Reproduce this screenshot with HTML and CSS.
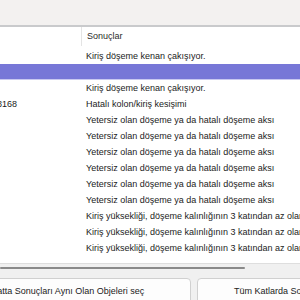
FILE: index.html
```html
<!DOCTYPE html>
<html lang="tr">
<head>
    <meta charset="UTF-8">
    <meta name="viewport" content="width=device-width, initial-scale=1.0">
    <title>Kontrol Sonuçları</title>
    <link rel="stylesheet" href="styles.css">
</head>
<body>
    <div class="toolbar"></div>
    <div class="grid">
        <div class="row head"><div class="c1"></div><div class="c2">Sonuçlar</div></div>
        <div class="row"><div class="c1"></div><div class="c2">Kiriş döşeme kenan çakışıyor.</div></div>
        <div class="row sel"><div class="c1"></div><div class="c2"></div></div>
        <div class="row"><div class="c1"></div><div class="c2">Kiriş döşeme kenan çakışıyor.</div></div>
        <div class="row"><div class="c1 id">38168</div><div class="c2">Hatalı kolon/kiriş kesişimi</div></div>
        <div class="row"><div class="c1"></div><div class="c2">Yetersiz olan döşeme ya da hatalı döşeme aksı</div></div>
        <div class="row"><div class="c1"></div><div class="c2">Yetersiz olan döşeme ya da hatalı döşeme aksı</div></div>
        <div class="row"><div class="c1"></div><div class="c2">Yetersiz olan döşeme ya da hatalı döşeme aksı</div></div>
        <div class="row"><div class="c1"></div><div class="c2">Yetersiz olan döşeme ya da hatalı döşeme aksı</div></div>
        <div class="row"><div class="c1"></div><div class="c2">Yetersiz olan döşeme ya da hatalı döşeme aksı</div></div>
        <div class="row"><div class="c1"></div><div class="c2">Yetersiz olan döşeme ya da hatalı döşeme aksı</div></div>
        <div class="row"><div class="c1"></div><div class="c2">Kiriş yüksekliği, döşeme kalınlığının 3 katından az olan kirişler</div></div>
        <div class="row"><div class="c1"></div><div class="c2">Kiriş yüksekliği, döşeme kalınlığının 3 katından az olan kirişler</div></div>
        <div class="row"><div class="c1"></div><div class="c2">Kiriş yüksekliği, döşeme kalınlığının 3 katından az olan kirişler</div></div>
    </div>
    <div class="hscroll"><div class="thumb"></div></div>
    <div class="actions">
        <button>Bu Katta Sonuçları Aynı Olan Objeleri seç</button>
        <button>Tüm Katlarda Sonuçları Aynı Olan Objeleri seç</button>
    </div>
</body>
</html>
```
FILE: styles.css
```css
body {
    margin: 0;
    width: 300px;
    height: 300px;
    overflow: hidden;
    font-family: 'Liberation Sans', Arial, sans-serif;
    font-size: 9px;
    color: #1b1b1b;
    background-color: #f0f0f0;
}

.toolbar {
    height: 25px;
    background-color: #f3f1f0;
    border-bottom: 2px solid #c9cacc;
}

.grid {
    height: 236px;
    overflow: hidden;
    background-color: #fff;
}

.row {
    display: flex;
    height: 16px;
    line-height: 16px;
    white-space: nowrap;
}

.row.head {
    height: 21px;
    line-height: 19px;
}

.c1 {
    width: 82px;
    flex: none;
    overflow: hidden;
}

.c1.id {
    text-indent: -8px;
}

.c2 {
    padding-left: 4px;
}

.head .c1 {
    height: 19px;
    border-right: 1px solid #e4e4e4;
    width: 81px;
}

.head .c2 {
    padding-left: 5px;
    color: #2b2b2b;
}

.row.sel {
    background-color: #7777d7;
    border-bottom: 1px solid #c9c9f0;
    height: 16px;
    box-sizing: border-box;
}

.hscroll {
    height: 15px;
    border-top: 1px solid #dedede;
    box-sizing: border-box;
    padding-top: 3px;
}

.thumb {
    width: 245px;
    height: 2px;
    border-radius: 1px;
    background-color: #8a8a8a;
}

.actions {
    display: flex;
    gap: 6px;
    margin-left: -69px;
}

button {
    flex: none;
    width: 260px;
    height: 26px;
    padding: 0;
    font-family: inherit;
    font-size: 9px;
    color: #1b1b1b;
    background-color: #fdfdfd;
    border: 1px solid #d0d0d0;
    border-radius: 4px;
}
```
